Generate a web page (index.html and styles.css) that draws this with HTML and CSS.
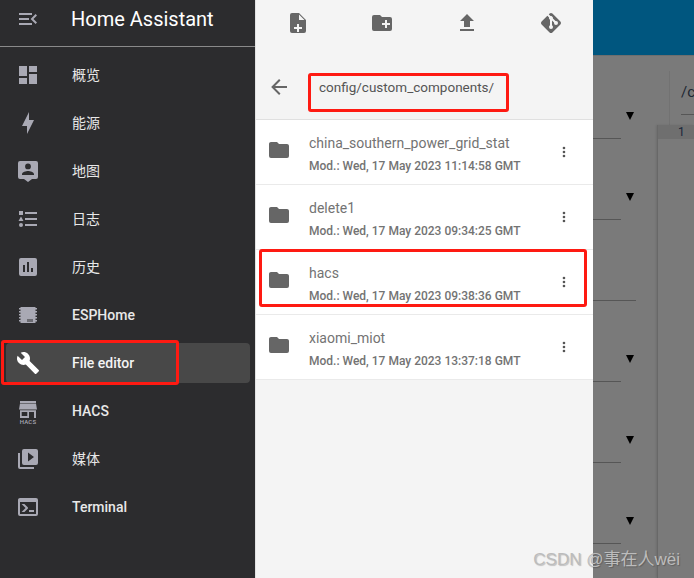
FILE: index.html
```html
<!DOCTYPE html>
<html lang="zh">
<head>
<meta charset="utf-8">
<title>File editor</title>
<link rel="stylesheet" href="styles.css">
</head>
<body>
<div class="app">
  <aside class="sidebar">
    <header class="side-head">
      <svg class="icon" viewBox="0 0 24 24"><path d="M21 15.61L19.59 17L14.58 12L19.59 7L21 8.39L17.44 12L21 15.61M3 6H16V8H3V6M3 13V11H13V13H3M3 18V16H16V18H3Z"/></svg>
      <span class="brand">Home Assistant</span>
    </header>
    <nav class="nav">
      <a class="item cjk"><svg class="icon" viewBox="0 0 24 24"><path d="M13 3V9H21V3M13 21H21V11H13M3 21H11V15H3M3 13H11V3H3V13Z"/></svg><span>概览</span></a>
      <a class="item cjk"><svg class="icon" viewBox="0 0 24 24"><path d="M11 15H6L13 1V9H18L11 23V15Z"/></svg><span>能源</span></a>
      <a class="item cjk"><svg class="icon" viewBox="0 0 24 24"><path d="M4 2H20A2 2 0 0 1 22 4V18A2 2 0 0 1 20 20H16L12 23L8 20H4A2 2 0 0 1 2 18V4A2 2 0 0 1 4 2M12 4.5A2.9 2.9 0 0 0 9.1 7.4A2.9 2.9 0 0 0 12 10.3A2.9 2.9 0 0 0 14.9 7.4A2.9 2.9 0 0 0 12 4.5M18 16V15C18 13 14 11.9 12 11.9C10 11.9 6 13 6 15V16H18Z"/></svg><span>地图</span></a>
      <a class="item cjk"><svg class="icon" viewBox="0 0 24 24"><path d="M5 9.5L7.5 14H2.5L5 9.5M3 4H7V8H3V4M5 20A2 2 0 0 0 7 18A2 2 0 0 0 5 16A2 2 0 0 0 3 18A2 2 0 0 0 5 20M9 5V7H21V5H9M9 19H21V17H9V19M9 13H21V11H9V13Z"/></svg><span>日志</span></a>
      <a class="item cjk"><svg class="icon" viewBox="0 0 24 24"><path fill-rule="evenodd" d="M5 3H19A2 2 0 0 1 21 5V19A2 2 0 0 1 19 21H5A2 2 0 0 1 3 19V5A2 2 0 0 1 5 3M9 17V10H7V17H9M13 17V7H11V17H13M17 17V13H15V17H17Z"/></svg><span>历史</span></a>
      <a class="item strong"><svg class="icon" viewBox="0 0 24 24"><path d="M4.5 4H19.5V20H4.5ZM3 5H4.5V6.5H3ZM3 8H4.5V9.5H3ZM3 11H4.5V12.5H3ZM3 14H4.5V15.5H3ZM3 17H4.5V18.5H3ZM19.5 5H21V6.5H19.5ZM19.5 8H21V9.5H19.5ZM19.5 11H21V12.5H19.5ZM19.5 14H21V15.5H19.5ZM19.5 17H21V18.5H19.5Z"/><path class="cut" d="M11.5 16H12.5V19H11.5ZM13.5 16H14.5V19H13.5ZM15.5 16H16.5V19H15.5Z"/></svg><span>ESPHome</span></a>
      <a class="item strong active"><svg class="icon" viewBox="0 0 24 24"><path d="M22.7 19L13.6 9.9C14.5 7.6 14 4.9 12.1 3C10.1 1 7.1 .6 4.7 1.7L9 6L6 9L1.6 4.7C.4 7.1 .9 10.1 2.9 12.1C4.8 14 7.5 14.5 9.8 13.6L18.9 22.7C19.3 23.1 19.9 23.1 20.3 22.7L22.6 20.4C23.1 20 23.1 19.3 22.7 19Z"/></svg><span>File editor</span></a>
      <a class="item strong"><svg class="icon" viewBox="0 0 24 24"><path d="M4 2H20V4H4ZM4 4.5H20L21 10.5H3ZM4 11.2H20V19H18V13H13V19H4V11.2ZM5.7 13V17H11.3V13Z" fill-rule="evenodd"/><text class="hacs-text" x="12" y="25">HACS</text></svg><span>HACS</span></a>
      <a class="item cjk"><svg class="icon" viewBox="0 0 24 24"><path d="M4 6H2V20A2 2 0 0 0 4 22H18V20H4V6M20 2H8A2 2 0 0 0 6 4V16A2 2 0 0 0 8 18H20A2 2 0 0 0 22 16V4A2 2 0 0 0 20 2M12 14.5V5.5L18 10L12 14.5Z"/></svg><span>媒体</span></a>
      <a class="item strong"><svg class="icon" viewBox="0 0 24 24"><path d="M20 19V7H4V19H20M20 3A2 2 0 0 1 22 5V19A2 2 0 0 1 20 21H4A2 2 0 0 1 2 19V5C2 3.89 2.9 3 4 3H20M13 17V15H18V17H13M9.58 13L5.57 9H8.4L11.7 12.3C12.09 12.69 12.09 13.33 11.7 13.72L8.42 17H5.59L9.58 13Z"/></svg><span>Terminal</span></a>
    </nav>
  </aside>

  <section class="browser">
    <div class="toolbar">
      <svg class="icon" viewBox="0 0 24 24"><path d="M13 2H6A2 2 0 0 0 4 4V20A2 2 0 0 0 6 22H18A2 2 0 0 0 20 20V9L13 2M13 9V3.5L18.5 9H13M11 13H13V16H16V18H13V21H11V18H8V16H11V13Z" fill-rule="evenodd"/></svg>
      <svg class="icon" viewBox="0 0 24 24"><path d="M10 4L12 6H20A2 2 0 0 1 22 8V18A2 2 0 0 1 20 20H4A2 2 0 0 1 2 18V6A2 2 0 0 1 4 4H10M15 9V12H12V14H15V17H17V14H20V12H17V9H15Z" fill-rule="evenodd"/></svg>
      <svg class="icon" viewBox="0 0 24 24"><path d="M9 16V10H5L12 3L19 10H15V16H9M5 20V18H19V20H5Z"/></svg>
      <svg class="icon" viewBox="0 0 24 24"><path d="M2.6 10.59L8.38 4.8L10.07 6.5C9.83 7.35 10.22 8.28 11 8.73V14.27C10.4 14.61 10 15.26 10 16A2 2 0 0 0 12 18A2 2 0 0 0 14 16C14 15.26 13.6 14.61 13 14.27V9.41L15.07 11.5C15 11.65 15 11.82 15 12A2 2 0 0 0 17 14A2 2 0 0 0 19 12A2 2 0 0 0 17 10C16.82 10 16.65 10 16.5 10.07L13.93 7.5C14.19 6.57 13.71 5.55 12.78 5.16C12.35 5 11.9 4.96 11.5 5.07L9.8 3.38L10.59 2.6C11.37 1.81 12.63 1.81 13.41 2.6L21.4 10.59C22.19 11.37 22.19 12.63 21.4 13.41L13.41 21.4C12.63 22.19 11.37 22.19 10.59 21.4L2.6 13.41C1.81 12.63 1.81 11.37 2.6 10.59Z"/></svg>
    </div>
    <div class="pathbar">
      <svg class="icon" viewBox="0 0 24 24"><path d="M20 11V13H8L13.5 18.5L12.08 19.92L4.16 12L12.08 4.08L13.5 5.5L8 11H20Z"/></svg>
      <span class="path">config/custom_components/</span>
    </div>
    <ul class="files">
      <li class="file">
        <svg class="icon folder" viewBox="0 0 24 24"><path d="M10 4H4C2.89 4 2 4.89 2 6V18A2 2 0 0 0 4 20H20A2 2 0 0 0 22 18V8C22 6.89 21.1 6 20 6H12L10 4Z"/></svg>
        <div class="meta"><div class="name">china_southern_power_grid_stat</div><div class="mod">Mod.: Wed, 17 May 2023 11:14:58 GMT</div></div>
        <svg class="icon more" viewBox="0 0 24 24"><path d="M12 16A2 2 0 0 1 14 18A2 2 0 0 1 12 20A2 2 0 0 1 10 18A2 2 0 0 1 12 16M12 10A2 2 0 0 1 14 12A2 2 0 0 1 12 14A2 2 0 0 1 10 12A2 2 0 0 1 12 10M12 4A2 2 0 0 1 14 6A2 2 0 0 1 12 8A2 2 0 0 1 10 6A2 2 0 0 1 12 4Z"/></svg>
      </li>
      <li class="file">
        <svg class="icon folder" viewBox="0 0 24 24"><path d="M10 4H4C2.89 4 2 4.89 2 6V18A2 2 0 0 0 4 20H20A2 2 0 0 0 22 18V8C22 6.89 21.1 6 20 6H12L10 4Z"/></svg>
        <div class="meta"><div class="name">delete1</div><div class="mod">Mod.: Wed, 17 May 2023 09:34:25 GMT</div></div>
        <svg class="icon more" viewBox="0 0 24 24"><path d="M12 16A2 2 0 0 1 14 18A2 2 0 0 1 12 20A2 2 0 0 1 10 18A2 2 0 0 1 12 16M12 10A2 2 0 0 1 14 12A2 2 0 0 1 12 14A2 2 0 0 1 10 12A2 2 0 0 1 12 10M12 4A2 2 0 0 1 14 6A2 2 0 0 1 12 8A2 2 0 0 1 10 6A2 2 0 0 1 12 4Z"/></svg>
      </li>
      <li class="file">
        <svg class="icon folder" viewBox="0 0 24 24"><path d="M10 4H4C2.89 4 2 4.89 2 6V18A2 2 0 0 0 4 20H20A2 2 0 0 0 22 18V8C22 6.89 21.1 6 20 6H12L10 4Z"/></svg>
        <div class="meta"><div class="name">hacs</div><div class="mod">Mod.: Wed, 17 May 2023 09:38:36 GMT</div></div>
        <svg class="icon more" viewBox="0 0 24 24"><path d="M12 16A2 2 0 0 1 14 18A2 2 0 0 1 12 20A2 2 0 0 1 10 18A2 2 0 0 1 12 16M12 10A2 2 0 0 1 14 12A2 2 0 0 1 12 14A2 2 0 0 1 10 12A2 2 0 0 1 12 10M12 4A2 2 0 0 1 14 6A2 2 0 0 1 12 8A2 2 0 0 1 10 6A2 2 0 0 1 12 4Z"/></svg>
      </li>
      <li class="file">
        <svg class="icon folder" viewBox="0 0 24 24"><path d="M10 4H4C2.89 4 2 4.89 2 6V18A2 2 0 0 0 4 20H20A2 2 0 0 0 22 18V8C22 6.89 21.1 6 20 6H12L10 4Z"/></svg>
        <div class="meta"><div class="name">xiaomi_miot</div><div class="mod">Mod.: Wed, 17 May 2023 13:37:18 GMT</div></div>
        <svg class="icon more" viewBox="0 0 24 24"><path d="M12 16A2 2 0 0 1 14 18A2 2 0 0 1 12 20A2 2 0 0 1 10 18A2 2 0 0 1 12 16M12 10A2 2 0 0 1 14 12A2 2 0 0 1 12 14A2 2 0 0 1 10 12A2 2 0 0 1 12 10M12 4A2 2 0 0 1 14 6A2 2 0 0 1 12 8A2 2 0 0 1 10 6A2 2 0 0 1 12 4Z"/></svg>
      </li>
    </ul>
  </section>

  <section class="backdrop">
    <div class="topbar"></div>
    <div class="editor-area">
      <div class="selects">
        <div class="select"><i class="arrow"></i></div>
        <div class="select"><i class="arrow"></i></div>
        <div class="select long"></div>
        <div class="select"><i class="arrow"></i></div>
        <div class="select"><i class="arrow"></i></div>
        <div class="select"><i class="arrow"></i></div>
      </div>
      <div class="editor">
        <div class="pathfield"><div class="pathinput">/c</div></div>
        <div class="code"><div class="gutter">1</div></div>
      </div>
    </div>
  </section>
</div>

<div class="mark mark-nav"></div>
<div class="mark mark-path"></div>
<div class="mark mark-row"></div>
<div class="watermark">CSDN @事在人wëi</div>
</body>
</html>
```

FILE: styles.css
```css
* { box-sizing: border-box; }
html, body { margin: 0; height: 100%; overflow: hidden; }
body { position: relative; font-family: Roboto, "Noto Sans CJK SC", sans-serif; }
.app { display: flex; width: 694px; height: 578px; }
.icon { width: 24px; height: 24px; flex: none; display: block; overflow: visible; }

.sidebar { width: 255px; flex: none; background: #2c2c2e; color: #e1e1e1; }
.sidebar .icon { fill: #a9a9b4; }
.side-head { height: 47px; display: flex; align-items: center; gap: 31px; padding: 0 16px 8px; border-bottom: 1px solid #8a8a8a; }
.brand { font-size: 20px; color: #fff; }
.nav { display: flex; flex-direction: column; gap: 8px; padding: 8px 5px 0 6px; }
.item { height: 40px; display: flex; align-items: center; gap: 32px; padding: 0 10px; border-radius: 4px; font-size: 14px; color: #e8e8e8; }
.cjk span { padding-bottom: 2px; }
.strong { font-weight: 500; }
.active { background: #484848; color: #f4f4f4; }
.sidebar .active .icon { fill: #fff; }
.sidebar .cut { fill: #2c2c2e; }
.hacs-text { font-size: 6px; font-weight: 500; text-anchor: middle; letter-spacing: .2px; }

.browser { width: 338px; flex: none; background: #f4f4f4; border-left: 1px solid #e2e2e2; display: flex; flex-direction: column; }
.browser .icon { fill: #666; }
.toolbar { height: 47px; display: flex; justify-content: space-between; padding: 11px 30px 0 30px; }
.pathbar { height: 73px; display: flex; align-items: flex-start; padding: 28px 0 0 11px; gap: 28px; border-bottom: 1px solid #e0e0e0; }
.path { font-size: 13.5px; color: #555; line-height: 24px; }
.files { list-style: none; margin: 0; padding: 0; background: #fff; }
.file { height: 65px; display: flex; align-items: center; padding: 0 21px 0 11px; gap: 16px; border-bottom: 1px solid #eaeaea; }
.folder { margin-bottom: 4px; }
.meta { flex: 1; min-width: 0; margin-left: 2px; align-self: flex-start; padding-top: 13px; }
.name { font-size: 14px; color: #737373; line-height: 20px; }
.mod { font-size: 12px; font-weight: 500; color: #737373; line-height: 16px; margin-top: 5px; }
.browser .more { width: 16px; height: 16px; fill: #555; }

.backdrop { flex: 1; min-width: 0; background: #7a7a7a; display: flex; flex-direction: column; }
.topbar { height: 56px; background: #00567f; border-bottom: 1px solid #6e6e6e; }
.editor-area { flex: 1; display: flex; overflow: hidden; }
.selects { width: 64px; flex: none; padding-top: 2px; }
.select { height: 81px; width: 28px; border-bottom: 1px solid #565656; position: relative; }
.select.long { width: 43px; }
.arrow { position: absolute; left: 33px; bottom: 18px; width: 0; height: 0; border-left: 4px solid transparent; border-right: 4px solid transparent; border-top: 8px solid #000; }
.editor { flex: 1; min-width: 0; display: flex; flex-direction: column; }
.pathfield { height: 54px; flex: none; margin: 15px 0 0 12px; border-left: 1px solid #727272; padding-left: 11px; }
.pathinput { height: 44px; padding-top: 10px; font-size: 15px; line-height: 22px; color: #1d2732; border-bottom: 1px solid #565656; white-space: nowrap; }
.code { flex: 1; border-left: 1px solid #686868; box-shadow: -1px 0 2px rgba(0,0,0,.1); }
.gutter { height: 14px; background: #6f6f6f; color: #18263a; font-size: 12px; line-height: 14px; padding-left: 20px; }

.mark { position: absolute; border: 3px solid #fe1a12; border-radius: 3px; }
.mark-nav { left: 1px; top: 340px; width: 178px; height: 45px; }
.mark-path { left: 308px; top: 73px; width: 201px; height: 39px; }
.mark-row { left: 259px; top: 249px; width: 328px; height: 58px; }
.watermark { position: absolute; right: 14px; top: 550px; font-family: "Liberation Sans", "Noto Sans CJK SC", sans-serif; font-size: 17px; line-height: 20px; color: #bcbcbc; text-shadow: 1px 1px 1px rgba(0,0,0,.22); white-space: nowrap; }
```
